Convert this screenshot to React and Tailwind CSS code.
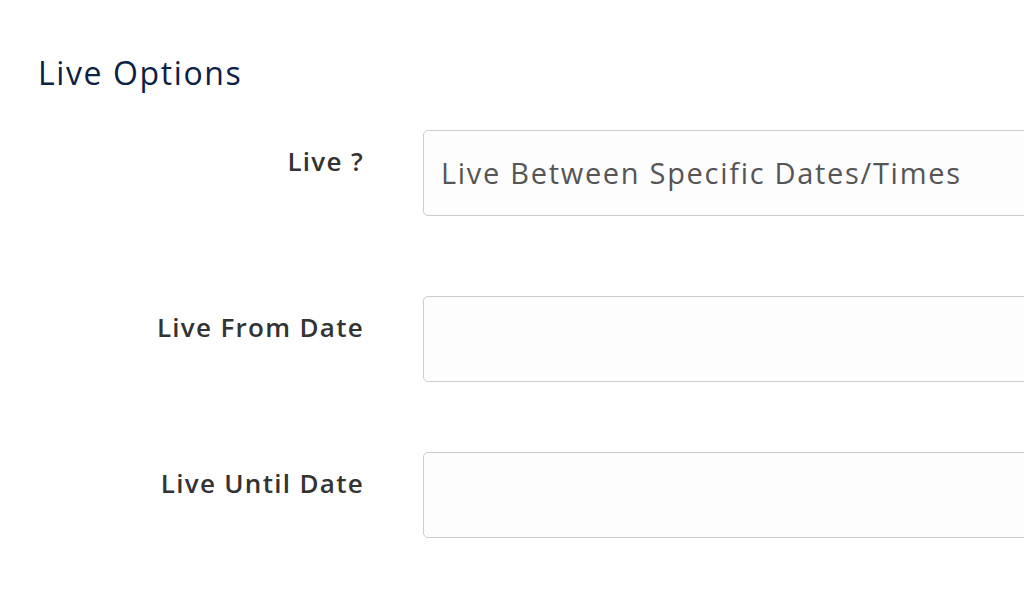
function Row({ label, value, className }) {
  return (
    <div className={"flex items-start " + className}>
      <label className="mr-[-2px] w-[326px] shrink-0 pt-[12px] text-right text-[26px] font-semibold tracking-[1.3px] text-[#333333]">
        {label}
      </label>
      <div className="ml-[61px] flex h-[86px] w-[700px] shrink-0 items-center rounded-[5px] border border-[#cccccc] bg-[#fdfdfd] px-[17px] text-[29px] tracking-[1.7px] text-[#555555]">
        {value}
      </div>
    </div>
  );
}

export default function App() {
  return (
    <div className="h-[594px] w-[1024px] overflow-hidden bg-white pl-[38px] pt-[52px] font-['Open_Sans',sans-serif]">
      <h2 className="text-[32px] leading-[42px] tracking-[1.6px] text-[#0b2145]">Live Options</h2>
      <Row className="mt-[36px]" label="Live ?" value="Live Between Specific Dates/Times" />
      <Row className="mt-[80px]" label="Live From Date" value="" />
      <Row className="mt-[70px]" label="Live Until Date" value="" />
    </div>
  );
}
